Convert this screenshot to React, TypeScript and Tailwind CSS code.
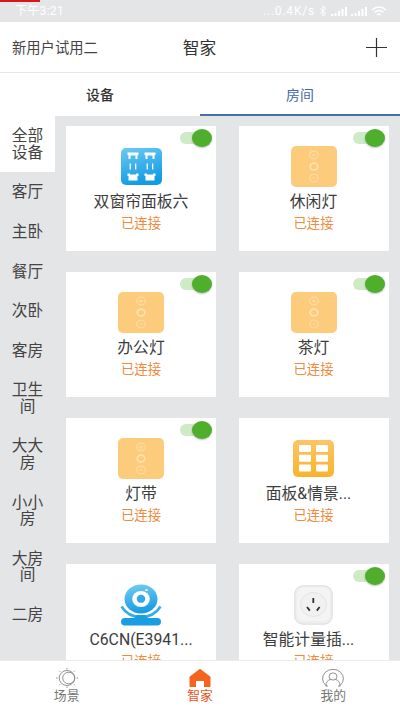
import type { ReactNode } from "react";
import clsx from "clsx";

const rooms = ["全部设备", "客厅", "主卧", "餐厅", "次卧", "客房", "卫生间", "大大房", "小小房", "大房间", "二房"];

type Device = {
  name: string;
  icon: ReactNode;
  toggle: boolean;
  clipped?: boolean;
};

function CurtainIcon() {
  return (
    <svg width="41" height="37" viewBox="0 0 41 37">
      <defs>
        <linearGradient id="curtain" x1="0" y1="0" x2="0.3" y2="1">
          <stop offset="0" stopColor="#6cc9f3" />
          <stop offset="1" stopColor="#149ce3" />
        </linearGradient>
      </defs>
      <rect width="41" height="37" rx="5" fill="url(#curtain)" />
      {[0, 17].map((x) => (
        <g key={x} transform={`translate(${x} 0)`} fill="#fff">
          <path d="M6.5 4.5h11v2.4h-1v4h-2V7.5h-5v3.4h-2v-4h-1z" />
          <path d="M8.6 15.5h1.3v6H8.6zM14 15.5h1.3v6H14z" />
          <path d="M6.5 25.5h2.5v1h6v-1h2.5V28h-1v4.500h-9V28h-1z" />
        </g>
      ))}
    </svg>
  );
}

function LampPanelIcon() {
  return (
    <svg width="46" height="41" viewBox="0 0 46 41">
      <rect width="46" height="41" rx="5" fill="#fdcb7c" />
      <g fill="none" stroke="#fee2b3">
        <ellipse cx="23" cy="9" rx="4.2" ry="3.8" strokeWidth="0.9" />
        <path d="M21 9h4M23 7.3v3.4" strokeWidth="0.8" />
        <ellipse cx="23" cy="20.5" rx="3.8" ry="3.4" strokeWidth="1.6" />
        <ellipse cx="23" cy="32" rx="4.2" ry="3.8" strokeWidth="0.9" />
        <path d="M21.5 32h3" strokeWidth="0.7" />
      </g>
    </svg>
  );
}

function ScenePanelIcon() {
  return (
    <svg width="41" height="37" viewBox="0 0 41 37">
      <defs>
        <linearGradient id="scene" x1="0" y1="0" x2="0" y2="1">
          <stop offset="0" stopColor="#fcc566" />
          <stop offset="1" stopColor="#fab32b" />
        </linearGradient>
      </defs>
      <rect width="41" height="37" rx="5" fill="url(#scene)" />
      {[5, 14.7, 24.4].map((y) => (
        <g key={y} fill="#fff">
          <rect x="6" y={y} width="12" height="7" rx="1" />
          <rect x="23" y={y} width="12" height="7" rx="1" />
        </g>
      ))}
    </svg>
  );
}

function CameraIcon() {
  return (
    <svg width="42" height="42" viewBox="0 0 42 42">
      <defs>
        <linearGradient id="camera" x1="0" y1="0" x2="0.2" y2="1">
          <stop offset="0" stopColor="#75cdf4" />
          <stop offset="1" stopColor="#189de2" />
        </linearGradient>
      </defs>
      <path d="M1.5 22.5Q8 33 21 33t19.5-10.5" fill="none" stroke="#36ace8" strokeWidth="2.6" />
      <rect x="1" y="34" width="40" height="7.5" rx="3.7" fill="#1a9ee2" />
      <path d="M14 34l3-3h8l3 3z" fill="#1a9ee2" />
      <ellipse cx="21" cy="15" rx="16.5" ry="14.5" fill="url(#camera)" />
      <ellipse cx="21" cy="15" rx="8.8" ry="8" fill="#fff" />
      <ellipse cx="21" cy="14.8" rx="4.3" ry="4" fill="#35a9e8" />
      <ellipse cx="26.5" cy="6" rx="1.5" ry="1" fill="#eaf7fd" />
    </svg>
  );
}

function SocketIcon() {
  return (
    <svg width="39" height="40" viewBox="0 0 39 40">
      <rect x="0.8" y="0.8" width="37.4" height="38.4" rx="8" fill="#eeeeef" stroke="#dcdcde" />
      <rect x="3" y="2.5" width="33" height="33.5" rx="6.5" fill="#f4f4f5" />
      <ellipse cx="19.5" cy="19.5" rx="13" ry="12" fill="#f1f1f2" stroke="#e4e4e6" />
      <path d="M19.3 13v5M13 22l2.8 3.6M25.6 22l-2.8 3.6" stroke="#303033" strokeWidth="1.8" />
    </svg>
  );
}

const devices: Device[] = [
  { name: "双窗帘面板六", icon: <CurtainIcon />, toggle: true },
  { name: "休闲灯", icon: <LampPanelIcon />, toggle: true },
  { name: "办公灯", icon: <LampPanelIcon />, toggle: true },
  { name: "茶灯", icon: <LampPanelIcon />, toggle: true },
  { name: "灯带", icon: <LampPanelIcon />, toggle: true },
  { name: "面板&情景...", icon: <ScenePanelIcon />, toggle: false, clipped: true },
  { name: "C6CN(E3941...", icon: <CameraIcon />, toggle: false },
  { name: "智能计量插...", icon: <SocketIcon />, toggle: true, clipped: true },
];

function Toggle() {
  return (
    <div className="absolute top-[2px] right-[4px] flex h-[19px] w-[32px] items-center">
      <div className="h-[12px] w-[26px] rounded-full bg-[#cfeac6]" />
      <div className="absolute right-0 h-[18px] w-[20px] rounded-[50%] bg-[#4fae2b] shadow-[0_1px_2px_rgba(0,0,0,0.25)]" />
    </div>
  );
}

function DeviceCard({ name, icon, toggle, clipped }: Device) {
  return (
    <div className="relative flex h-[125px] flex-col items-center bg-white">
      {toggle && <Toggle />}
      <div className="mt-[20px] flex h-[41px] items-center justify-center">{icon}</div>
      {/* a shortened name keeps free space after its dots */}
      <div
        className={clsx(
          "mt-[5px] h-[20px] text-[15.8px] leading-[20px] whitespace-nowrap text-[#3c3c3c]",
          clipped && "pr-[10px]",
        )}
      >
        {name}
      </div>
      <div className="mt-[4px] h-[16px] text-[13.4px] leading-[16px] whitespace-nowrap text-[#f08a3c]">已连接</div>
    </div>
  );
}

function StatusBar() {
  return (
    <div className="relative flex h-[22px] shrink-0 items-center justify-between bg-[#e4e5e7] pr-[13px] pl-[15px] text-[12px] text-white">
      <div className="absolute top-0 left-0 h-[2px] w-[40px] bg-[#d9161c]" />
      <span className="tracking-[0.3px]">下午3:21</span>
      <div className="flex items-center gap-[4px]">
        <span className="tracking-[0.8px]">...0.4K/s</span>
        <svg width="8" height="12" viewBox="0 0 8 12" fill="none" stroke="#fff">
          <path d="M1 3.5l6 5L4 11V1l3 2.5-6 5" />
        </svg>
        {[0, 1].map((i) => (
          <svg key={i} width="16" height="10" viewBox="0 0 16 10" fill="#fff">
            <path d="M0 8h2v2H0zM3.5 7h2v3h-2zM7 5h2v5H7zM10.5 3h2v7h-2zM14 1h2v9h-2z" />
          </svg>
        ))}
        <svg width="16" height="11" viewBox="0 0 16 11" fill="none" stroke="#fff" strokeWidth="1.5">
          <path d="M1 4q7-6 14 0M3.5 6.5q4.5-4 9 0M6 9q2-2 4 0" />
        </svg>
      </div>
    </div>
  );
}

function SceneIcon() {
  return (
    <svg width="22" height="20" viewBox="0 0 22 20" fill="none" stroke="#858585" strokeWidth="0.9">
      <ellipse cx="11" cy="10" rx="7.8" ry="7.5" />
      <ellipse cx="12.7" cy="10" rx="6" ry="5.8" />
      <path d="M11 0v1.5M11 18.5V20M0 10h1.5M20.5 10H22M3.2 2.8l1 1M18.8 2.8l-1 1M3.2 17.2l1-1M18.8 17.2l-1-1" />
    </svg>
  );
}

function HomeIcon() {
  return (
    <svg width="22" height="20" viewBox="0 0 22 20" fill="#f4641e">
      <path d="M11 0.7L0.5 8.7V18q0 1 1 1H7v-6h8v6h5.5q1 0 1-1V8.7z" />
    </svg>
  );
}

function MineIcon() {
  return (
    <svg width="24" height="20" viewBox="0 0 24 20" fill="none" stroke="#858585" strokeWidth="0.9">
      <path d="M5 17.5A10.4 9.3 0 1 1 19 17.5" />
      <ellipse cx="12" cy="8.5" rx="4" ry="3.6" />
      <path d="M5 17.8q0-5.3 4.5-6.3M19 17.8q0-5.3-4.5-6.3M4.5 18H7M17 18h2.5" />
    </svg>
  );
}

const navItems = [
  { label: "场景", icon: <SceneIcon />, active: false },
  { label: "智家", icon: <HomeIcon />, active: true },
  { label: "我的", icon: <MineIcon />, active: false },
];

export default function App() {
  return (
    <div className="flex h-[711px] w-[400px] flex-col overflow-hidden bg-white font-[Roboto,'Noto_Sans_CJK_SC',sans-serif]">
      <StatusBar />

      <header className="grid h-[51px] shrink-0 grid-cols-3 items-center border-b border-[#e6e6e6] pr-[13px] pl-[12px] text-[#444]">
        <span className="pt-[3px] text-[14.3px] whitespace-nowrap">新用户试用二</span>
        <span className="pt-[3px] text-center text-[16.7px] text-[#333]">智家</span>
        <svg className="justify-self-end" width="21" height="19" viewBox="0 0 21 19" stroke="#333" strokeWidth="1.2">
          <path d="M0 9.5h21M10.5 0v19" />
        </svg>
      </header>

      <div className="grid h-[43px] shrink-0 grid-cols-2 text-center text-[13.9px] leading-[20px]">
        <div className="h-[43px] pt-[12px] font-medium text-[#333]">设备</div>
        <div className="h-[43px] border-b-2 border-[#4470ae] pt-[12px] text-[#3f69a5]">房间</div>
      </div>

      <main className="flex min-h-0 flex-1 overflow-hidden bg-[#e4e5e7]">
        <aside className="w-[55px] shrink-0 text-center text-[15.7px] leading-[16.5px] text-[#444]">
          {rooms.map((room, i) => (
            <div key={room} className={clsx("px-[11px] pt-[12.4px] pb-[10.7px]", i === 0 && "bg-white")}>
              {room}
            </div>
          ))}
        </aside>
        <section className="grid flex-1 grid-cols-2 content-start gap-x-[22.5px] gap-y-[21px] pt-[10px] pr-[11.5px] pl-[11px]">
          {devices.map((d) => (
            <DeviceCard key={d.name} {...d} />
          ))}
        </section>
      </main>

      <nav className="grid h-[51px] shrink-0 grid-cols-3 border-t border-[#ececec] bg-white">
        {navItems.map((item) => (
          <div key={item.label} className="flex flex-col items-center pt-[7px]">
            {item.icon}
            <span className={clsx("text-[12.8px] leading-[16px]", item.active ? "text-[#e8541c]" : "text-[#777]")}>
              {item.label}
            </span>
          </div>
        ))}
      </nav>
    </div>
  );
}
